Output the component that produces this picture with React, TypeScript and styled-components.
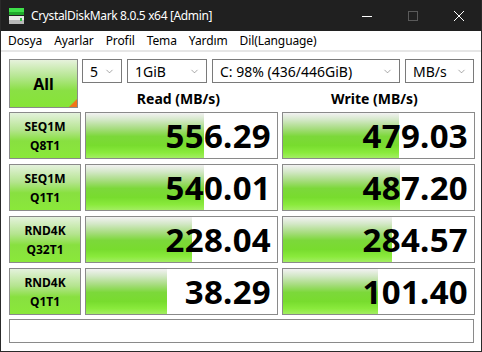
import React from 'react';
import styled, { createGlobalStyle } from 'styled-components';
import { ChevronDown } from 'lucide-react';

interface Result {
  label: [string, string];
  read: string;
  write: string;
  readFill: number;
  writeFill: number;
}

const results: Result[] = [
  { label: ['SEQ1M', 'Q8T1'], read: '556.29', write: '479.03', readFill: 118, writeFill: 116 },
  { label: ['SEQ1M', 'Q1T1'], read: '540.01', write: '487.20', readFill: 118, writeFill: 117 },
  { label: ['RND4K', 'Q32T1'], read: '228.04', write: '284.57', readFill: 106, writeFill: 109 },
  { label: ['RND4K', 'Q1T1'], read: '38.29', write: '101.40', readFill: 81, writeFill: 95 },
];

const menuItems = ['Dosya', 'Ayarlar', 'Profil', 'Tema', 'Yardım', 'Dil(Language)'];

const GlobalStyle = createGlobalStyle`
  html, body {
    margin: 0;
    padding: 0;
    background: #ffffff;
  }
  * {
    box-sizing: border-box;
  }
`;

const Window = styled.div`
  width: 482px;
  height: 352px;
  background: #ffffff;
  border: 1px solid #2a2a2a;
  border-top: none;
  font-family: 'Segoe UI', 'Noto Sans', sans-serif;
  display: flex;
  flex-direction: column;
  overflow: hidden;
`;

const TitleBar = styled.div`
  height: 31px;
  margin: 0 -1px;
  background: #202020;
  color: #ffffff;
  display: flex;
  align-items: center;
  font-size: 12px;
`;

const AppIcon = styled.svg`
  margin-left: 8px;
  margin-right: 7px;
  flex: none;
`;

const TitleText = styled.span`
  flex: 1;
  letter-spacing: -0.35px;
`;

const WinButton = styled.div`
  width: 46px;
  height: 31px;
  display: flex;
  align-items: center;
  justify-content: center;
`;

const MenuBar = styled.div`
  height: 21px;
  display: flex;
  align-items: center;
  padding-left: 1px;
  border-bottom: 2px solid #e6e6e6;
  font-size: 12px;
  color: #000;
`;

const MenuItem = styled.span`
  padding: 0 6px;
  letter-spacing: -0.1px;
`;

const Content = styled.div`
  padding: 7px 7px 0 8px;
  display: flex;
  flex-direction: column;
`;

const Top = styled.div`
  display: flex;
  gap: 4px;
  margin-bottom: 4px;
`;

const AllButton = styled.div`
  position: relative;
  width: 72px;
  height: 49px;
  border: 1px solid #8a8a8a;
  background: linear-gradient(to bottom, #e6f2dc 0%, #b6e692 35%, #8ae044 65%, #86e436 100%);
  display: flex;
  align-items: center;
  justify-content: center;
  font-weight: 700;
  font-size: 16px;
  color: #000;

  &::after {
    content: '';
    position: absolute;
    right: 0;
    bottom: 0;
    border-style: solid;
    border-width: 0 0 8px 8px;
    border-color: transparent transparent #f07418 transparent;
  }
`;

const TopRight = styled.div`
  flex: 1;
  display: flex;
  flex-direction: column;
`;

const Combos = styled.div`
  display: flex;
  gap: 5px;
  height: 24px;
`;

const Combo = styled.div<{ $w: number }>`
  width: ${(p) => p.$w}px;
  height: 24px;
  border: 1px solid #7a7a7a;
  background: #ffffff;
  display: flex;
  align-items: center;
  justify-content: space-between;
  padding: 0 6px 0 7px;
  font-size: 14px;
  color: #000;
`;

const Headers = styled.div`
  display: flex;
  gap: 3px;
  height: 25px;
  align-items: center;
`;

const HeaderCell = styled.div`
  width: 193px;
  text-align: center;
  font-weight: 700;
  font-size: 14px;
  color: #000;
  padding-top: 5px;
`;

const Grid = styled.div`
  display: grid;
  grid-template-columns: 72px 193px 193px;
  grid-auto-rows: 47px;
  column-gap: 4px;
  row-gap: 5px;
`;

const LabelCell = styled.div`
  border: 1px solid #8a8a8a;
  background: linear-gradient(to bottom, #e4f2dc 0%, #b4e48e 38%, #88e040 62%, #8ae83a 100%);
  display: flex;
  flex-direction: column;
  align-items: center;
  justify-content: center;
  font-weight: 700;
  font-size: 12px;
  line-height: 19px;
  color: #000;
`;

const ValueCell = styled.div<{ $fill: number }>`
  border: 1px solid #8a8a8a;
  background:
    linear-gradient(
        to bottom,
        #f2f2f2 0%,
        #d4e8c8 15%,
        #a6dc7e 35%,
        #7cd83a 52%,
        #78dc2e 72%,
        #8aea3c 88%,
        #a2ee62 100%
      )
      no-repeat,
    #ffffff;
  background-size: ${(p) => p.$fill}px 100%;
  display: flex;
  align-items: center;
  justify-content: flex-end;
  padding-right: 6px;
  font-weight: 700;
  font-size: 33px;
  color: #000;
  letter-spacing: 0.3px;
`;

const StatusBar = styled.div`
  margin-top: 4px;
  width: 465px;
  height: 24px;
  border: 1px solid #8a8a8a;
  background: #ffffff;
`;

const App: React.FC = () => {
  return (
    <>
      <GlobalStyle />
      <Window>
        <TitleBar>
          <AppIcon width="16" height="18" viewBox="0 0 16 18">
            <rect x="1" y="1" width="15" height="4" fill="#3ee04a" />
            <rect x="1" y="5" width="15" height="3" fill="#1fa82c" />
            <rect x="1" y="9" width="15" height="8" fill="#e8e8e8" />
            <rect x="1" y="13" width="15" height="4" fill="#b8b8b8" />
            <rect x="12" y="11" width="2" height="3" fill="#30c040" />
          </AppIcon>
          <TitleText>CrystalDiskMark 8.0.5 x64 [Admin]</TitleText>
          <WinButton>
            <svg width="12" height="12" viewBox="0 0 12 12">
              <line x1="1" y1="6.5" x2="11" y2="6.5" stroke="#ffffff" strokeWidth="1" />
            </svg>
          </WinButton>
          <WinButton>
            <svg width="12" height="12" viewBox="0 0 12 12">
              <rect x="1.5" y="1.5" width="9" height="9" fill="none" stroke="#5a5a5a" strokeWidth="1" />
            </svg>
          </WinButton>
          <WinButton>
            <svg width="12" height="12" viewBox="0 0 12 12">
              <path d="M1 1 L11 11 M11 1 L1 11" stroke="#ffffff" strokeWidth="1" />
            </svg>
          </WinButton>
        </TitleBar>
        <MenuBar>
          {menuItems.map((m) => (
            <MenuItem key={m}>{m}</MenuItem>
          ))}
        </MenuBar>
        <Content>
          <Top>
            <AllButton>All</AllButton>
            <TopRight>
              <Combos>
                <Combo $w={40}>
                  5<ChevronDown size={11} strokeWidth={1.2} color="#606060" />
                </Combo>
                <Combo $w={80}>
                  1GiB<ChevronDown size={11} strokeWidth={1.2} color="#606060" />
                </Combo>
                <Combo $w={188}>
                  C: 98% (436/446GiB)<ChevronDown size={11} strokeWidth={1.2} color="#606060" />
                </Combo>
                <Combo $w={69}>
                  MB/s<ChevronDown size={11} strokeWidth={1.2} color="#606060" />
                </Combo>
              </Combos>
              <Headers>
                <HeaderCell>Read (MB/s)</HeaderCell>
                <HeaderCell>Write (MB/s)</HeaderCell>
              </Headers>
            </TopRight>
          </Top>
          <Grid>
            {results.map((r) => (
              <React.Fragment key={r.label.join('')}>
                <LabelCell>
                  <span>{r.label[0]}</span>
                  <span>{r.label[1]}</span>
                </LabelCell>
                <ValueCell $fill={r.readFill}>{r.read}</ValueCell>
                <ValueCell $fill={r.writeFill}>{r.write}</ValueCell>
              </React.Fragment>
            ))}
          </Grid>
          <StatusBar />
        </Content>
      </Window>
    </>
  );
};

export default App;
